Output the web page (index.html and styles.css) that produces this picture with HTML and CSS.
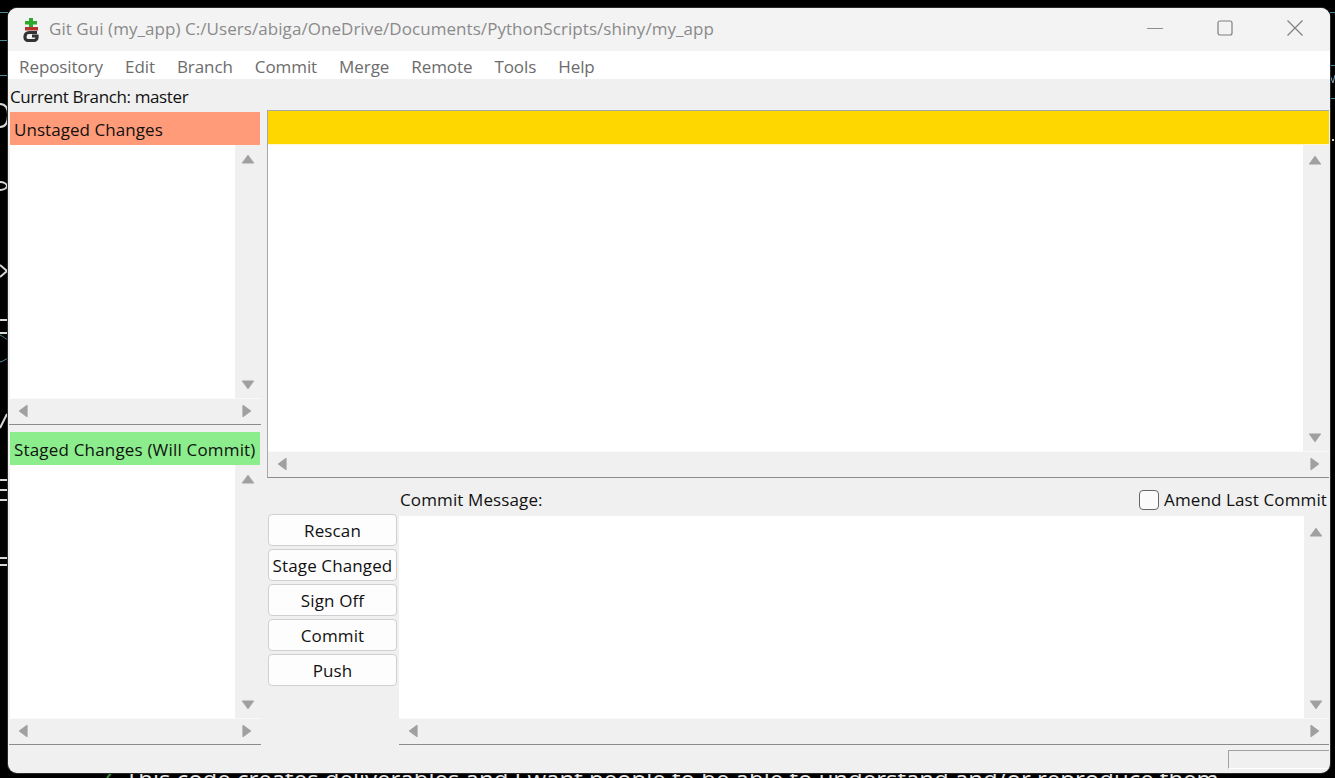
FILE: index.html
```html
<!DOCTYPE html>
<html lang="en">
<head>
    <meta charset="UTF-8">
    <title>Git Gui (my_app)</title>
    <link rel="stylesheet" href="styles.css">
</head>
<body>
    <svg class="defs" width="0" height="0">
        <symbol id="tri" viewBox="0 0 14 14">
            <path d="M7 3.5 L12.5 11 L1.5 11 Z" fill="#a0a0a0" stroke="#a0a0a0" stroke-width="1.2" stroke-linejoin="round"/>
        </symbol>
    </svg>

    <!-- bits of the desktop that show around the window -->
    <svg class="desktop" width="1335" height="778" viewBox="0 0 1335 778">
        <g fill="none" stroke="#4d8b94">
            <path d="M0 12.5h8M0 40.5h8M0 75.5h8M1330 12.5h5M1330 65.5h5M1330 98.5h5"/>
            <path d="M0 335c4 2 6 4 8 5M0 362c4-1 6-3 8-4"/>
        </g>
        <g fill="none" stroke="#d8d8d8" stroke-width="2">
            <path d="M0 104c5 0 8 3 8 11s-3 12-8 12"/>
            <path d="M0 265l7 6-7 6"/>
            <path d="M0 320h8M0 333h8M0 428l7-14M0 558h8M0 565h8"/>
            <path d="M0 190c4 0 7-2 7-4s-3-4-7-4"/>
            <path d="M0 490h8M0 480h7M0 500h7"/>
        </g>
        <path d="M1330 75l3 8 2-8" fill="none" stroke="#7aa0b8"/>
        <rect x="1332" y="139" width="2" height="2" fill="#ccc"/>
        <path d="M107 778l5-6" stroke="#3c8a3c" fill="none" stroke-width="2"/>
    </svg>

    <p class="behind-text">This code creates deliverables and I want people to be able to understand and/or reproduce them.</p>

    <div class="window">
        <div class="titlebar">
            <svg class="logo" width="16" height="24" viewBox="0 0 16 24">
                <path d="M6 0h4v3h4v3.5h-4V9H6V6.5H2V3h4z" fill="#2fa82f"/>
                <rect x="2" y="9" width="13" height="3.5" fill="#b5332e"/>
                <path d="M14 14.5H6a4 4 0 0 0-4 4v1a3 3 0 0 0 3 3h6a3 3 0 0 0 3-3V18H9" stroke="#333" stroke-width="3.2" fill="none"/>
            </svg>
            <span class="title">Git Gui (my_app) C:/Users/abiga/OneDrive/Documents/PythonScripts/shiny/my_app</span>
            <div class="controls">
                <svg width="16" height="16" viewBox="0 0 16 16"><path d="M0 8.5h16" stroke="#8f8f8f" fill="none"/></svg>
                <svg width="16" height="16" viewBox="0 0 16 16"><rect x="1" y="1" width="14" height="14" rx="2" stroke="#7f7f7f" stroke-width="1.2" fill="none"/></svg>
                <svg width="16" height="16" viewBox="0 0 16 16"><path d="M.5 .5l15 15M15.500 .5l-15 15" stroke="#7f7f7f" stroke-width="1.2" fill="none"/></svg>
            </div>
        </div>

        <div class="menubar">
            <span>Repository</span>
            <span>Edit</span>
            <span>Branch</span>
            <span>Commit</span>
            <span>Merge</span>
            <span>Remote</span>
            <span>Tools</span>
            <span>Help</span>
        </div>

        <div class="branch">Current Branch: master</div>

        <div class="panes">
            <div class="left">
                <div class="file-pane">
                    <div class="pane-head unstaged">Unstaged Changes</div>
                    <div class="list-row">
                        <div class="list"></div>
                        <div class="vscroll">
                            <svg class="arrow"><use href="#tri"/></svg>
                            <svg class="arrow down"><use href="#tri"/></svg>
                        </div>
                    </div>
                    <div class="hscroll">
                        <svg class="arrow to-left"><use href="#tri"/></svg>
                        <svg class="arrow to-right"><use href="#tri"/></svg>
                    </div>
                </div>
                <div class="file-pane">
                    <div class="pane-head staged">Staged Changes (Will Commit)</div>
                    <div class="list-row">
                        <div class="list"></div>
                        <div class="vscroll">
                            <svg class="arrow"><use href="#tri"/></svg>
                            <svg class="arrow down"><use href="#tri"/></svg>
                        </div>
                    </div>
                    <div class="hscroll">
                        <svg class="arrow to-left"><use href="#tri"/></svg>
                        <svg class="arrow to-right"><use href="#tri"/></svg>
                    </div>
                </div>
            </div>

            <div class="right">
                <div class="diff">
                    <div class="diff-head"></div>
                    <div class="diff-row">
                        <div class="list"></div>
                        <div class="vscroll">
                            <svg class="arrow"><use href="#tri"/></svg>
                            <svg class="arrow down"><use href="#tri"/></svg>
                        </div>
                    </div>
                    <div class="hscroll">
                        <svg class="arrow to-left"><use href="#tri"/></svg>
                        <svg class="arrow to-right"><use href="#tri"/></svg>
                    </div>
                </div>

                <div class="commit-area">
                    <div class="buttons">
                        <button>Rescan</button>
                        <button>Stage Changed</button>
                        <button>Sign Off</button>
                        <button>Commit</button>
                        <button>Push</button>
                    </div>
                    <div class="message">
                        <div class="message-head">
                            <span>Commit Message:</span>
                            <label class="amend"><span class="checkbox"></span>Amend Last Commit</label>
                        </div>
                        <div class="message-row">
                            <div class="list"></div>
                            <div class="vscroll">
                                <svg class="arrow"><use href="#tri"/></svg>
                                <svg class="arrow down"><use href="#tri"/></svg>
                            </div>
                        </div>
                        <div class="hscroll">
                            <svg class="arrow to-left"><use href="#tri"/></svg>
                            <svg class="arrow to-right"><use href="#tri"/></svg>
                        </div>
                    </div>
                </div>
            </div>
        </div>

        <div class="statusbar">
            <div class="status-box"></div>
        </div>
    </div>
</body>
</html>
```

FILE: styles.css
```css
html, body {
    margin: 0;
    padding: 0;
    height: 778px;
    overflow: hidden;
}
body {
    background-color: #000;
    font-family: "Open Sans", sans-serif;
    font-size: 17px;
    color: #111;
    position: relative;
}
.defs {
    position: absolute;
}
.desktop {
    position: absolute;
    left: 0;
    top: 0;
}
.behind-text {
    position: absolute;
    left: 125px;
    top: 764px;
    margin: 0;
    color: #e8e8e8;
    font-size: 24px;
    line-height: 30px;
    white-space: nowrap;
}
.window {
    position: absolute;
    left: 8px;
    top: 8px;
    width: 1322px;
    height: 765px;
    background-color: #f0f0f0;
    border-radius: 9px;
    box-shadow: 0 0 0 1px #2b2b2b;
    overflow: hidden;
    display: flex;
    flex-direction: column;
}
.titlebar {
    height: 40px;
    padding: 0 0 3px 15px;
    background-color: #f3f3f3;
    display: flex;
    align-items: center;
    color: #8a8a8a;
}
.logo {
    margin-right: 10px;
    margin-top: 3px;
}
.title {
    flex: 1;
    white-space: nowrap;
    letter-spacing: .06px;
}
.controls {
    display: flex;
    gap: 54px;
    margin-right: 27px;
}
.menubar {
    height: 25px;
    padding: 3px 0 0 11px;
    background-color: #fff;
    display: flex;
    align-items: center;
    gap: 22px;
    color: #6c6c6c;
    letter-spacing: -.08px;
}
.branch {
    height: 31px;
    line-height: 36px;
    padding-left: 2px;
    white-space: nowrap;
    letter-spacing: -.38px;
}
.panes {
    height: 635px;
    display: flex;
}
.left {
    width: 252px;
    margin-left: 1px;
}
.file-pane {
    padding-top: 2px;
    margin-bottom: 5px;
    border-bottom: 1px solid #8c8c8c;
}
.pane-head {
    height: 33px;
    line-height: 35px;
    margin: 0 1px;
    padding-left: 4px;
    white-space: nowrap;
    letter-spacing: .06px;
}
.unstaged {
    background-color: #ff9b78;
}
.staged {
    background-color: #8ced8c;
    letter-spacing: .18px;
}
.list-row {
    height: 253px;
    margin: 0 1px;
    display: flex;
}
.list {
    flex: 1;
    background-color: #fff;
}
.vscroll {
    width: 25px;
    display: flex;
    flex-direction: column;
    justify-content: space-between;
    align-items: center;
    padding: 7px 0 6px;
    box-sizing: border-box;
    background-color: #f0f0f0;
}
.hscroll {
    height: 23px;
    padding: 0 7px 2px;
    border-top: 1px solid #fafafa;
    display: flex;
    align-items: center;
    justify-content: space-between;
    background-color: #f0f0f0;
}
.arrow {
    width: 14px;
    height: 14px;
    display: block;
}
.down {
    transform: rotate(180deg);
}
.to-left {
    transform: rotate(-90deg);
}
.to-right {
    transform: rotate(90deg);
}
.right {
    flex: 1;
    margin-left: 6px;
    margin-right: 1px;
}
.diff {
    border-top: 1px solid #a8a8a8;
    border-left: 1px solid #a8a8a8;
    border-bottom: 1px solid #8c8c8c;
}
.diff-head {
    height: 33px;
    background-color: #ffd700;
    border-bottom: 1px solid #fdf6d0;
}
.diff-row {
    height: 306px;
    display: flex;
}
.diff-row .vscroll {
    width: 26px;
    padding: 8px 2px 6px 0;
}
.commit-area {
    display: flex;
    height: 267px;
}
.buttons {
    width: 131px;
    padding: 36px 1px 0 1px;
    box-sizing: border-box;
    display: flex;
    flex-direction: column;
    gap: 3px;
}
button {
    height: 32px;
    padding: 0;
    font: inherit;
    letter-spacing: .12px;
    color: #111;
    background-color: #fdfdfd;
    border: 1px solid #d0d0d0;
    border-radius: 4px;
}
.message {
    flex: 1;
    margin-left: 1px;
    letter-spacing: .12px;
}
.message .hscroll {
    border-bottom: 1px solid #8c8c8c;
}
.message-head {
    height: 38px;
    box-sizing: border-box;
    display: flex;
    justify-content: space-between;
    align-items: flex-end;
    padding: 0 2px 3px 1px;
    line-height: 26px;
}
.amend {
    display: flex;
    align-items: center;
    gap: 5px;
}
.checkbox {
    width: 18px;
    height: 18px;
    border: 1px solid #666;
    border-radius: 4px;
    background-color: #fbfbfb;
}
.message-row {
    height: 202px;
    display: flex;
}
.message-row .vscroll {
    padding: 9px 2px 6px 0;
}
.statusbar {
    flex: 1;
    display: flex;
    justify-content: flex-end;
    padding: 5px 1px 0 0;
}
.status-box {
    width: 100px;
    height: 17px;
    border-top: 1px solid #a0a0a0;
    border-left: 1px solid #a0a0a0;
    border-bottom: 1px solid #fff;
}
```
